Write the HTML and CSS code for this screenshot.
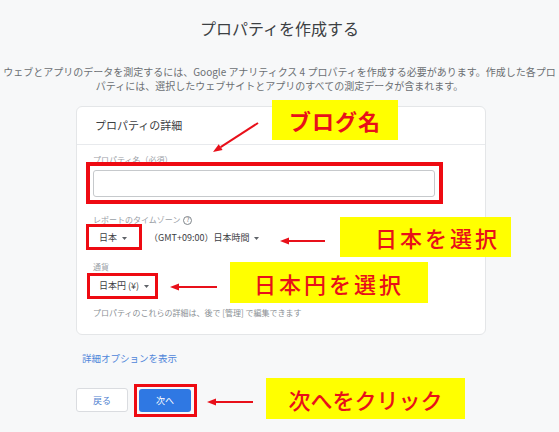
FILE: index.html
```html
<!DOCTYPE html>
<html lang="ja">
<head>
<meta charset="utf-8">
<title>プロパティを作成する</title>
<link rel="stylesheet" href="styles.css">
</head>
<body>
<div class="page">
  <h1 class="title">プロパティを作成する</h1>
  <p class="desc">ウェブとアプリのデータを測定するには、Google アナリティクス 4 プロパティを作成する必要があります。作成した各プロ<br>パティには、選択したウェブサイトとアプリのすべての測定データが含まれます。</p>
  <div class="main">
    <section class="card">
      <div class="card-head">プロパティの詳細</div>
      <div class="card-body">
        <div class="label">プロパティ名（必須）</div>
        <div class="input"></div>
        <div class="label tz">レポートのタイムゾーン <span class="help">?</span></div>
        <div class="row">
          <span class="select first">日本 <svg class="tri" width="5" height="3" viewBox="0 0 5 3"><path d="M0 0h5L2.5 3z"/></svg></span>
          <span class="select">（GMT+09:00）日本時間 <svg class="tri" width="5" height="3" viewBox="0 0 5 3"><path d="M0 0h5L2.5 3z"/></svg></span>
        </div>
        <div class="label cur">通貨</div>
        <div class="row row2">
          <span class="select first">日本円 (¥) <svg class="tri" width="5" height="3" viewBox="0 0 5 3"><path d="M0 0h5L2.5 3z"/></svg></span>
        </div>
        <div class="note">プロパティのこれらの詳細は、後で [管理] で編集できます</div>
      </div>
    </section>
    <a class="more">詳細オプションを表示</a>
    <div class="actions">
      <button class="btn back">戻る</button>
      <button class="btn next">次へ</button>
    </div>
  </div>

  <div class="anno">
    <div class="frame f-input"></div>
    <div class="frame f-tz"></div>
    <div class="frame f-cur"></div>
    <div class="frame f-next"></div>
    <div class="callout c-blog">ブログ名</div>
    <div class="callout c-jp">日本を選択</div>
    <div class="callout c-yen">日本円を選択</div>
    <div class="callout c-next">次へをクリック</div>
    <svg class="arrows" width="559" height="432" viewBox="0 0 559 432">
      <g stroke="#e8101a" stroke-width="2" fill="none">
        <line x1="258" y1="123" x2="220.6" y2="147.1"/>
        <line x1="325" y1="241" x2="287" y2="241"/>
        <line x1="217" y1="287" x2="177" y2="287"/>
        <line x1="253" y1="402" x2="214" y2="402"/>
      </g>
      <g fill="#e8101a">
        <polygon points="213,152 222.6,150.1 218.7,144.2"/>
        <polygon points="280,241 289,237.5 289,244.5"/>
        <polygon points="170,287 179,283.5 179,290.5"/>
        <polygon points="207,402 216,398.5 216,405.5"/>
      </g>
    </svg>
  </div>
</div>
</body>
</html>
```

FILE: styles.css
```css
* { box-sizing: border-box; }

body {
  margin: 0;
  background: #f7f8f9;
  font-family: "Noto Sans CJK JP", "Noto Sans", sans-serif;
}

.page {
  position: relative;
  width: 559px;
  height: 432px;
  overflow: hidden;
}

.title {
  margin: 0;
  padding-top: 18px;
  font-size: 16px;
  line-height: 20px;
  font-weight: 400;
  text-align: center;
  color: #3c4043;
}

.desc {
  margin: 27px 0 0;
  font-size: 10px;
  line-height: 14px;
  color: #6b6f73;
  text-align: center;
  white-space: nowrap;
}

.main {
  margin: 13px 0 0 76px;
  width: 410px;
}

.card {
  background: #fff;
  border: 1px solid #e4e6e8;
  border-radius: 6px;
}

.card-head {
  height: 38px;
  line-height: 37px;
  padding-left: 18px;
  font-size: 11px;
  color: #3c4043;
  border-bottom: 1px solid #e8eaed;
}

.card-body {
  padding: 9px 16px 15px;
}

.label {
  font-size: 8px;
  line-height: 12px;
  color: #9aa0a6;
}

.input {
  margin-top: 4px;
  width: 342px;
  height: 27px;
  border: 1px solid #c6c9cc;
  border-radius: 3px;
}

.tz {
  margin-top: 17px;
  display: flex;
  align-items: center;
  gap: 3px;
}

.help {
  display: inline-flex;
  align-items: center;
  justify-content: center;
  width: 9px;
  height: 9px;
  border: 1px solid #80868b;
  border-radius: 50%;
  font-size: 6px;
  line-height: 1;
  color: #5f6368;
}

.row {
  margin-top: 4px;
  display: flex;
  gap: 22px;
  height: 16px;
  line-height: 16px;
  font-size: 9px;
  color: #3c4043;
}

.select {
  display: inline-flex;
  align-items: center;
  gap: 5px;
}

.select.first {
  padding-left: 6px;
}

.tri {
  fill: #5f6368;
}

.cur {
  margin-top: 15px;
}

.row2 {
  margin-top: 5px;
}

.note {
  margin-top: 13px;
  font-size: 8px;
  line-height: 12px;
  color: #8a8f94;
}

.more {
  display: block;
  margin: 16px 0 0 6px;
  font-size: 9.5px;
  line-height: 14px;
  color: #4f86d9;
}

.actions {
  margin-top: 23px;
  display: flex;
  align-items: flex-start;
  gap: 11px;
}

.btn {
  width: 52px;
  height: 24px;
  padding: 0;
  font-family: inherit;
  font-size: 9px;
  border-radius: 3px;
}

.back {
  background: #fff;
  border: 1px solid #dadce0;
  color: #4f7fcf;
}

.next {
  height: 23px;
  margin-top: 1px;
  background: #2f78e3;
  border: none;
  color: #fff;
}

/* annotation overlay */
.anno {
  position: absolute;
  inset: 0;
  pointer-events: none;
}

.frame {
  position: absolute;
  border: 3.5px solid #ee0a12;
}

.f-input { left: 86px; top: 162px; width: 357px; height: 42px; border-width: 4px; }
.f-tz    { left: 86px; top: 224px; width: 56px;  height: 26px; }
.f-cur   { left: 87px; top: 273px; width: 71px;  height: 26px; }
.f-next  { left: 134px; top: 384px; width: 63px; height: 33px; }

.callout {
  position: absolute;
  display: flex;
  align-items: center;
  justify-content: center;
  background: #ffff00;
  color: #e8101a;
  font-size: 22px;
  font-weight: 500;
  line-height: 1;
}

.c-blog { left: 272px; top: 100px; width: 126px; height: 40px; font-weight: 700; letter-spacing: 1px; }
.c-jp   { left: 340px; top: 217px; width: 171px; height: 40px; letter-spacing: 3px; justify-content: flex-start; padding-left: 35px; }
.c-yen  { left: 230px; top: 262px; width: 198px; height: 41px; letter-spacing: 3px; }
.c-next { left: 266px; top: 378px; width: 199px; height: 41px; }

.arrows {
  position: absolute;
  left: 0;
  top: 0;
}
```
